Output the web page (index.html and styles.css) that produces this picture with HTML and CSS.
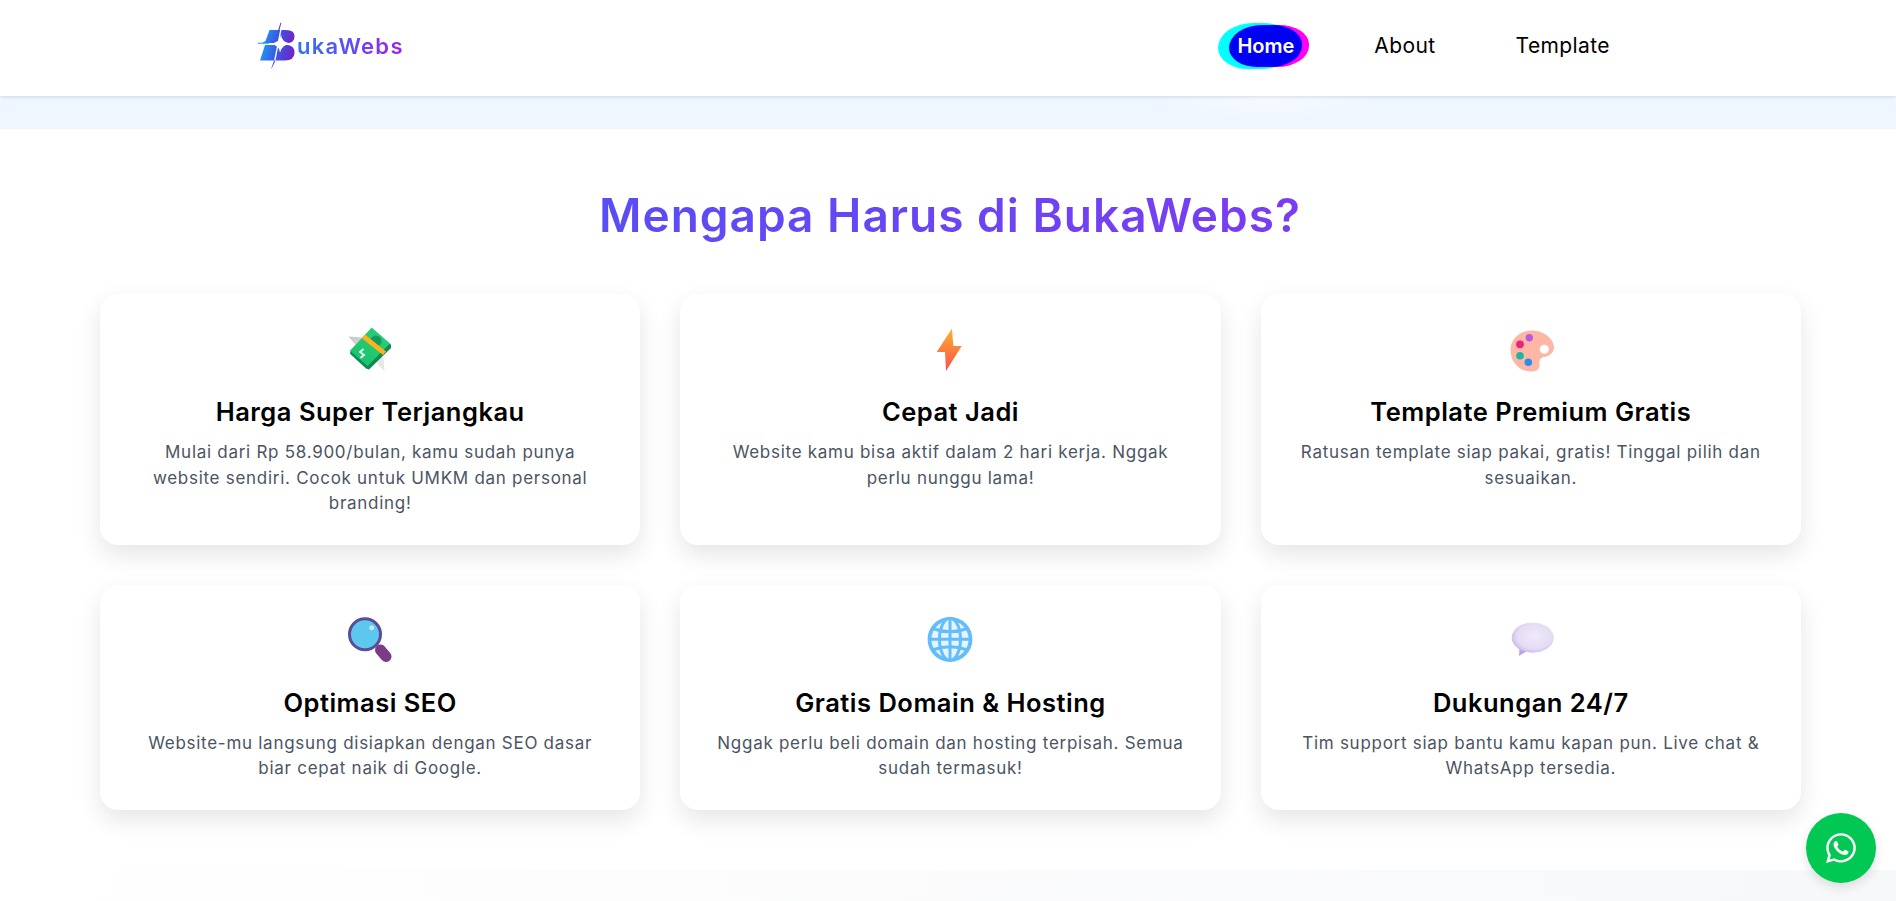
FILE: index.html
```html
<!DOCTYPE html>
<html lang="id">
<head>
<meta charset="utf-8">
<title>BukaWebs</title>
<link rel="stylesheet" href="styles.css">
</head>
<body>
<header class="topbar">
  <a class="brand" href="#">
    <svg class="brand-mark" viewBox="0 0 40 50" width="40" height="50" aria-hidden="true">
      <defs>
        <linearGradient id="lg" x1="0" y1="0" x2="1" y2="0.15"><stop offset="0" stop-color="#19a4fb"/><stop offset=".5" stop-color="#3a5ce2"/><stop offset="1" stop-color="#6a28c8"/></linearGradient>
      </defs>
      <path fill="url(#lg)" d="M12.500 9H29Q37.500 9 37.500 15Q37.500 21 32 22H5L8.500 20Z"/>
      <path fill="url(#lg)" d="M8 24H31Q38 25.500 37.500 32Q37 39.500 28 39.500H3Z"/>
      <path fill="#fff" d="M24.500 2L25.800 2L17 47L15.600 47Z"/>
      <path fill="#fff" d="M24 13.500Q24.500 21.500 34 22.500Q25 23.500 23 31.500Q22 23.500 13 23Q23 21.500 24 13.500Z"/>
      <path fill="#5a3fd8" d="M23.500 1.500L24.300 2L22.500 9H21.200Z"/>
      <path fill="#3f56e0" d="M17 39.500H18.500L14.700 47.500L14.300 47.200Z"/>
      <path fill="#19a4fb" d="M1 21.700H12V22.800H1Z"/>
    </svg>
    <span class="brand-text">ukaWebs</span>
  </a>
  <nav class="nav">
    <a class="nav-link is-active" href="#">Home</a>
    <a class="nav-link" href="#">About</a>
    <a class="nav-link" href="#">Template</a>
  </nav>
</header>
<div class="band"></div>
<main class="why">
  <h2 class="why-title"><span>Mengapa Harus di BukaWebs?</span></h2>
  <div class="grid">
    <article class="card">
      <svg class="emoji" viewBox="0 0 60 60" aria-hidden="true">
        <defs>
          <linearGradient id="wing" x1="0" y1="0" x2="1" y2="1"><stop offset="0" stop-color="#c4c6cb"/><stop offset="1" stop-color="#f4f3f3"/></linearGradient>
          <linearGradient id="bill" x1="0" y1="1" x2="1" y2="0"><stop offset="0" stop-color="#16c06a"/><stop offset="1" stop-color="#2fd07a"/></linearGradient>
        </defs>
        <path fill="url(#wing)" d="M8.500 16.500L24 17.500L42 40L20 30Z"/>
        <path fill="#e9e8e8" d="M33 33L43.500 37L44.500 51L38.500 45Z"/>
        <path fill="#0f8a55" d="M31.700 8.700L51 24.700L51 28L29 49.500L26 48.500L10 33.700L10.500 31Z"/>
        <path fill="url(#bill)" d="M31.700 7.500L50 23.500L27.500 46L10 30.800Z"/>
        <circle cx="36" cy="21" r="5.500" fill="#139a5c"/>
        <path fill="#ffb21e" d="M21.500 18L25 14.500L46 31.500L43 35Z"/>
        <path fill="none" stroke="#e8fff2" stroke-width="1.800" d="M23.500 29L20 32L24 35L20.500 38"/>
      </svg>
      <h3 class="card-title">Harga Super Terjangkau</h3>
      <p class="card-text">Mulai dari Rp 58.900/bulan, kamu sudah punya<br>website sendiri. Cocok untuk UMKM dan personal<br>branding!</p>
    </article>
    <article class="card">
      <svg class="emoji" viewBox="0 0 60 60" aria-hidden="true">
        <defs><linearGradient id="bolt" x1="0" y1="0" x2="0" y2="1"><stop offset="0" stop-color="#ffb02e"/><stop offset="1" stop-color="#f8504f"/></linearGradient></defs>
        <path fill="url(#bolt)" d="M32 8.500L16.700 32H25L26 51L41.700 26H33.300Z"/>
      </svg>
      <h3 class="card-title">Cepat Jadi</h3>
      <p class="card-text">Website kamu bisa aktif dalam 2 hari kerja. Nggak<br>perlu nunggu lama!</p>
    </article>
    <article class="card">
      <svg class="emoji" viewBox="0 0 60 60" aria-hidden="true">
        <path fill="#ffb7a5" d="M9.500 30C9.500 18 20 10 32 10.500C44 11 53.500 20 53 28C52.500 34 47 36.500 43 37C39 37.500 38 41 38.500 44C39 48 37 52 29 51.500C18 51 9.500 42 9.500 30Z"/>
        <circle cx="43.300" cy="29.300" r="4.500" fill="#fff"/>
        <circle cx="28.300" cy="17.700" r="3.700" fill="#b65be0"/>
        <circle cx="19" cy="24.300" r="3.900" fill="#e8247c"/>
        <circle cx="19" cy="35.700" r="3.800" fill="#1fb5a0"/>
        <circle cx="27.300" cy="42.300" r="3.800" fill="#2a8df0"/>
      </svg>
      <h3 class="card-title">Template Premium Gratis</h3>
      <p class="card-text">Ratusan template siap pakai, gratis! Tinggal pilih dan<br>sesuaikan.</p>
    </article>
    <article class="card">
      <svg class="emoji" viewBox="0 0 60 60" aria-hidden="true">
        <path stroke="#7a3c86" stroke-width="11" stroke-linecap="round" d="M40.500 39L46 45.500"/>
        <circle cx="25" cy="23.300" r="15.500" fill="#5cc8ee" stroke="#5a4c98" stroke-width="3"/>
        <circle cx="31.700" cy="16.700" r="2.500" fill="#c5e6f7"/>
      </svg>
      <h3 class="card-title">Optimasi SEO</h3>
      <p class="card-text">Website-mu langsung disiapkan dengan SEO dasar<br>biar cepat naik di Google.</p>
    </article>
    <article class="card">
      <svg class="emoji" viewBox="0 0 60 60" aria-hidden="true">
        <g fill="#e6f4ff" stroke="#62bdfa" stroke-width="3">
          <circle cx="30" cy="28.300" r="20.500" stroke-width="3.800"/>
          <ellipse cx="30" cy="28.300" rx="10.500" ry="21"/>
          <path fill="none" d="M30 7.300V49.300M9 28.300H51M12.500 17.500Q30 24 47.500 17.500M12.500 39Q30 32.500 47.500 39"/>
        </g>
      </svg>
      <h3 class="card-title">Gratis Domain &amp; Hosting</h3>
      <p class="card-text">Nggak perlu beli domain dan hosting terpisah. Semua<br>sudah termasuk!</p>
    </article>
    <article class="card">
      <svg class="emoji" viewBox="0 0 60 60" aria-hidden="true">
        <defs><radialGradient id="bub" cx=".55" cy=".45" r=".6"><stop offset="0" stop-color="#f0eafa"/><stop offset=".7" stop-color="#e4dcf4"/><stop offset="1" stop-color="#c5b5e6"/></radialGradient></defs>
        <path fill="#b9a6e2" d="M18 45L18.500 36L26 40Z"/>
        <ellipse cx="31.700" cy="26.700" rx="21" ry="15" fill="url(#bub)"/>
      </svg>
      <h3 class="card-title">Dukungan 24/7</h3>
      <p class="card-text">Tim support siap bantu kamu kapan pun. Live chat &amp;<br>WhatsApp tersedia.</p>
    </article>
  </div>
</main>
<footer class="foot"></footer>
<a class="wa" href="#" aria-label="WhatsApp">
  <svg viewBox="0 0 448 512" width="30" height="34" fill="#fff" aria-hidden="true"><path d="M380.900 97.100C339 55.100 283.200 32 223.900 32c-122.400 0-222 99.600-222 222 0 39.100 10.200 77.300 29.600 111L0 480l117.700-30.900c32.400 17.700 68.900 27 106.100 27h.1c122.300 0 224.100-99.600 224.100-222 0-59.300-25.200-115-67.100-157zm-157 341.600c-33.200 0-65.700-8.900-94-25.700l-6.700-4-69.800 18.300L72 359.200l-4.400-7c-18.500-29.400-28.200-63.300-28.200-98.200 0-101.700 82.800-184.500 184.600-184.500 49.300 0 95.600 19.200 130.400 54.100 34.800 34.900 56.200 81.200 56.100 130.500 0 101.800-84.900 184.600-186.600 184.600zm101.200-138.200c-5.500-2.800-32.800-16.200-37.900-18-5.100-1.900-8.800-2.800-12.500 2.800-3.700 5.600-14.300 18-17.600 21.800-3.200 3.700-6.500 4.200-12 1.400-32.600-16.300-54-29.100-75.500-66-5.700-9.800 5.700-9.100 16.300-30.300 1.800-3.700.9-6.900-.5-9.700-1.400-2.800-12.500-30.100-17.100-41.200-4.500-10.800-9.100-9.300-12.500-9.500-3.200-.2-6.900-.2-10.600-.2-3.700 0-9.700 1.400-14.800 6.900-5.100 5.600-19.400 19-19.400 46.300 0 27.300 19.900 53.700 22.600 57.400 2.800 3.700 39.100 59.700 94.800 83.800 35.200 15.200 49 16.500 66.600 13.900 10.700-1.600 32.800-13.400 37.400-26.400 4.600-13 4.600-24.100 3.200-26.400-1.300-2.500-5-3.900-10.500-6.600z"/></svg>
</a>
</body>
</html>
```

FILE: styles.css
```css
* { box-sizing: border-box; }
html, body { margin: 0; height: 901px; overflow: hidden; background: #fff; }
body { font-family: Inter, "Liberation Sans", sans-serif; color: #000; }
a { text-decoration: none; color: inherit; }

.topbar {
  position: relative;
  z-index: 2;
  height: 96px;
  display: flex;
  align-items: center;
  justify-content: space-between;
  padding: 0 278px 4px 257px;
  background: #fff;
  box-shadow: 0 1px 4px rgba(30, 58, 110, .16);
}
.brand { display: flex; align-items: center; }
.brand-mark { display: block; }
.brand-text {
  font-size: 22px;
  font-weight: 600;
  letter-spacing: 1.3px;
  background: linear-gradient(90deg, #2f74f2, #5a4ff5 45%, #a01ff0);
  -webkit-background-clip: text;
  background-clip: text;
  color: transparent;
}

.nav { display: flex; align-items: center; gap: 64px; }
.nav-link { padding: 8px; font-size: 21px; line-height: 26px; letter-spacing: .4px; }
.is-active {
  color: #fff;
  font-size: 20px;
  font-weight: 600;
  letter-spacing: 0;
  background: #0000f5;
  border-radius: 50% 45% 48% 42% / 60% 50% 55% 50%;
  box-shadow: 7px 0 0 0 #ff00f0, -9px 0 0 2px #00ffff;
}

.band {
  height: 33px;
  background: radial-gradient(ellipse 110px 24px at 1270px 0, #f8fbff, transparent), #eff6ff;
}

.why { height: 741px; padding-top: 50px; background: #fff; }
.why-title {
  width: 1700px;
  margin: 0 0 43px 100px;
  text-align: center;
  font-size: 46px;
  line-height: 72px;
  font-weight: 600;
  letter-spacing: 1px;
}
.why-title span {
  background: linear-gradient(90deg, #5a4df6, #7a3df0);
  -webkit-background-clip: text;
  background-clip: text;
  color: transparent;
}

.grid {
  width: 1701px;
  margin-left: 100px;
  display: grid;
  grid-template-columns: repeat(3, 540.33px);
  column-gap: 40px;
  row-gap: 40px;
}
.card {
  padding: 32px 24px 28px;
  background: #fff;
  border-radius: 18px;
  box-shadow: 0 10px 24px rgba(0, 0, 0, .1);
  text-align: center;
}
.emoji { display: block; width: 60px; height: 60px; margin: -6px auto 13px; }
.card-title { margin: 0 0 9px; font-size: 25.5px; line-height: 38.4px; font-weight: 600; letter-spacing: .5px; }
.card-text { margin: 0; font-size: 17px; line-height: 25.4px; color: #4b5563; letter-spacing: .72px; }

.foot { height: 40px; background: linear-gradient(90deg, #fff, #f7f8fa); }

.wa {
  position: fixed;
  right: 20px;
  bottom: 18px;
  width: 70px;
  height: 70px;
  border-radius: 50%;
  display: flex;
  align-items: center;
  justify-content: center;
  background: #00c853;
  box-shadow: 0 4px 12px rgba(0, 0, 0, .12);
}
```
